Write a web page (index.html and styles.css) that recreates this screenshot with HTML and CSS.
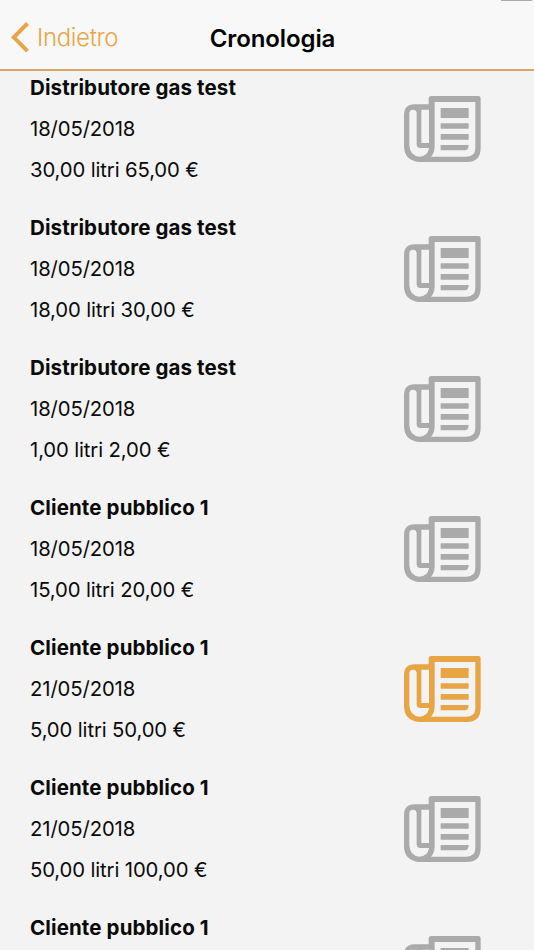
FILE: index.html
```html
<!DOCTYPE html>
<html lang="it">
<head>
  <meta charset="UTF-8">
  <meta name="viewport" content="width=device-width, initial-scale=1.0">
  <title>Cronologia</title>
  <link rel="stylesheet" href="styles.css">
</head>
<body>
  <svg class="defs" width="0" height="0">
    <symbol id="news" viewBox="0 0 231 198">
      <path fill-rule="evenodd" d="M82 0H223Q230 0 230 7V156Q230 198 188 198H45Q0 193 0 150V57Q0 25 32 25H74V8Q74 0 82 0Z
        M92 18V151Q92 171 81 182H188Q214 182 214 156V18Z
        M16 51V148Q18 180 46 182Q71 182 75 156H49Q38 156 38 145V51Q37 41 27 41Q17 41 16 51Z
        M52 41V141H75V41Z"/>
      <path d="M110 36H194V66H110ZM110 82H194V98H110ZM110 114H194V131H110ZM110 147H194Q194 163 182 163H110Z"/>
    </symbol>
  </svg>

  <header class="navbar">
    <a class="back" href="#">
      <svg class="chevron" viewBox="0 0 18 31"><path d="M16.5 1.5L2.8 15.3L16.5 29.2"/></svg>
      <span>Indietro</span>
    </a>
    <h1>Cronologia</h1>
    <div class="battery"></div>
  </header>

  <ul class="list">
    <li class="item">
      <div class="info">
        <h2>Distributore gas test</h2>
        <p>18/05/2018</p>
        <p>30,00 litri 65,00 €</p>
      </div>
      <svg class="icon"><use href="#news"/></svg>
    </li>
    <li class="item">
      <div class="info">
        <h2>Distributore gas test</h2>
        <p>18/05/2018</p>
        <p>18,00 litri 30,00 €</p>
      </div>
      <svg class="icon"><use href="#news"/></svg>
    </li>
    <li class="item">
      <div class="info">
        <h2>Distributore gas test</h2>
        <p>18/05/2018</p>
        <p>1,00 litri 2,00 €</p>
      </div>
      <svg class="icon"><use href="#news"/></svg>
    </li>
    <li class="item">
      <div class="info">
        <h2>Cliente pubblico 1</h2>
        <p>18/05/2018</p>
        <p>15,00 litri 20,00 €</p>
      </div>
      <svg class="icon"><use href="#news"/></svg>
    </li>
    <li class="item">
      <div class="info">
        <h2>Cliente pubblico 1</h2>
        <p>21/05/2018</p>
        <p>5,00 litri 50,00 €</p>
      </div>
      <svg class="icon active"><use href="#news"/></svg>
    </li>
    <li class="item">
      <div class="info">
        <h2>Cliente pubblico 1</h2>
        <p>21/05/2018</p>
        <p>50,00 litri 100,00 €</p>
      </div>
      <svg class="icon"><use href="#news"/></svg>
    </li>
    <li class="item">
      <div class="info">
        <h2>Cliente pubblico 1</h2>
      </div>
      <svg class="icon"><use href="#news"/></svg>
    </li>
  </ul>
</body>
</html>
```

FILE: styles.css
```css
* {
  box-sizing: border-box;
}
body {
  margin: 0;
  height: 950px;
  overflow: hidden;
  display: flex;
  flex-direction: column;
  background-color: #f3f3f3;
  color: #0a0a0a;
  font-family: Inter, "Liberation Sans", sans-serif;
}
.defs {
  position: absolute;
}
.navbar {
  position: relative;
  flex: none;
  display: grid;
  grid-template-columns: 1fr auto 1fr;
  align-items: center;
  height: 71px;
  padding: 6px 0 0 11px;
  background-color: #f8f8f8;
  border-bottom: 2px solid #dba566;
}
.back {
  display: flex;
  align-items: center;
  gap: 8px;
  color: #e8a545;
  font-size: 24px;
  font-weight: 350;
  letter-spacing: -0.35px;
  text-decoration: none;
}
.chevron {
  width: 18px;
  height: 31px;
  fill: none;
  stroke: #e8a545;
  stroke-width: 4;
}
h1 {
  margin: 0;
  font-size: 24px;
  font-weight: 600;
  letter-spacing: -0.1px;
  line-height: 31px;
  padding-top: 1px;
  color: #000;
}
.battery {
  position: absolute;
  top: 0;
  right: 2px;
  width: 31px;
  height: 1px;
  background-color: #aaa;
}
.list {
  flex: 1;
  min-height: 0;
  overflow: hidden;
  margin: 0;
  padding: 4px 53px 0 30px;
  list-style: none;
}
.item {
  display: flex;
  justify-content: space-between;
  align-items: flex-start;
  height: 140px;
}
.info {
  display: flex;
  flex-direction: column;
  gap: 15px;
}
.info h2, .info p {
  margin: 0;
  font-size: 20.3px;
  line-height: 26px;
  letter-spacing: -0.12px;
  white-space: nowrap;
}
.info h2 {
  font-size: 20.5px;
  font-weight: 700;
  letter-spacing: 0.12px;
}
.icon {
  width: 77px;
  height: 66px;
  margin-top: 21px;
  fill: #aaa;
}
.icon.active {
  fill: #e8a545;
}
```
